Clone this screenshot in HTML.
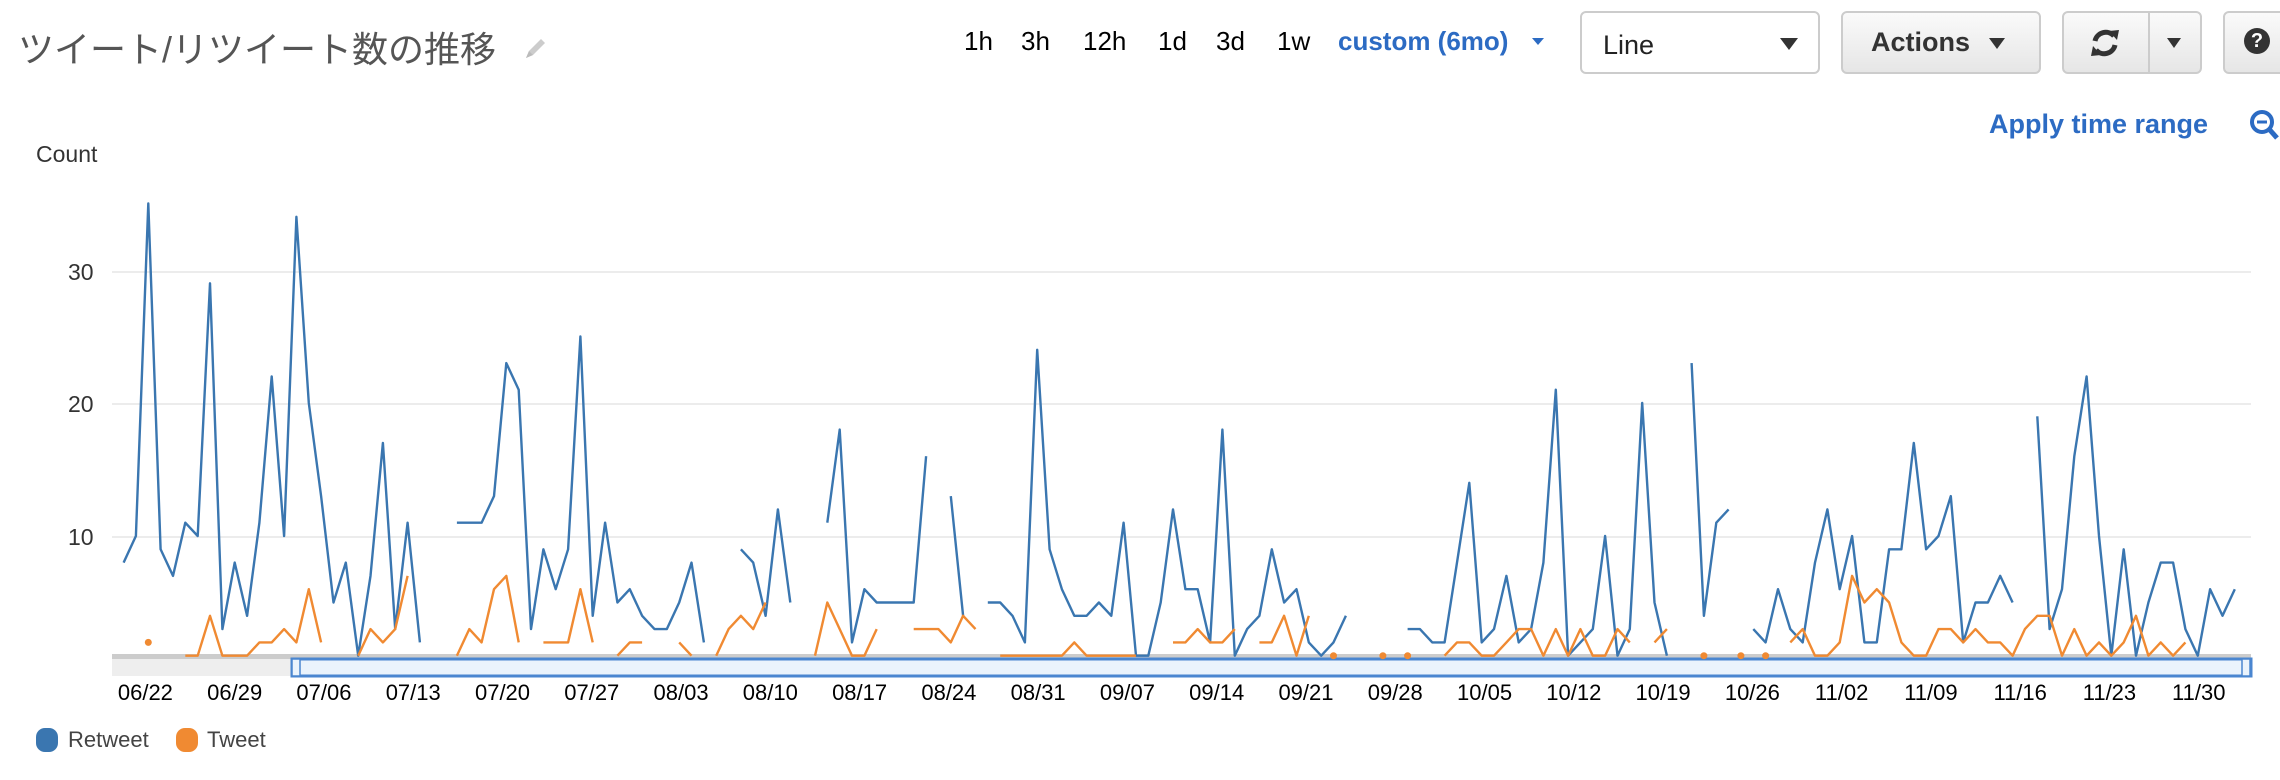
<!DOCTYPE html>
<html><head><meta charset="utf-8">
<style>
body{margin:0;width:2280px;height:780px;background:#fff;font-family:"Liberation Sans","Noto Sans CJK JP",sans-serif;overflow:hidden;position:relative}
.a{position:absolute;white-space:nowrap}
.btn{position:absolute;border:2px solid #ccc;border-radius:6px;background:linear-gradient(#fafafa,#e6e6e6);box-sizing:border-box}
</style></head><body>
<div class="a" style="left:18px;top:21px;font-size:36px;color:#555">ツイート/リツイート数の推移</div>
<svg class="a" style="left:522px;top:36px" width="26" height="26" viewBox="0 0 26 26"><path d="M4 22 L7 15 L19 3 L23 7 L11 19 Z" fill="#ccc"/><path d="M4 22 L7 15 L11 19Z" fill="#bbb"/></svg>
<div class="a" style="left:964px;top:26px;font-size:26px;color:#000;word-spacing:0">1h</div>
<div class="a" style="left:1021px;top:26px;font-size:26px">3h</div>
<div class="a" style="left:1083px;top:26px;font-size:26px">12h</div>
<div class="a" style="left:1158px;top:26px;font-size:26px">1d</div>
<div class="a" style="left:1216px;top:26px;font-size:26px">3d</div>
<div class="a" style="left:1277px;top:26px;font-size:26px">1w</div>
<div class="a" style="left:1338px;top:26px;font-size:26px;color:#2c6bc3;font-weight:bold">custom (6mo)</div>
<div class="a" style="left:1532px;top:38px;width:0;height:0;border-left:6px solid transparent;border-right:6px solid transparent;border-top:7px solid #2c6bc3"></div>
<div class="a" style="left:1580px;top:11px;width:240px;height:63px;border:2px solid #ccc;border-radius:6px;box-sizing:border-box;background:#fff"></div>
<div class="a" style="left:1603px;top:30px;font-size:27px;color:#222">Line</div>
<div class="a" style="left:1780px;top:38px;border-left:9px solid transparent;border-right:9px solid transparent;border-top:12px solid #333"></div>
<div class="btn" style="left:1841px;top:11px;width:200px;height:63px"></div>
<div class="a" style="left:1871px;top:27px;font-size:27px;font-weight:bold;color:#333">Actions</div>
<div class="a" style="left:1989px;top:38px;border-left:8px solid transparent;border-right:8px solid transparent;border-top:11px solid #333"></div>
<div class="btn" style="left:2062px;top:11px;width:140px;height:63px"></div>
<div class="a" style="left:2148px;top:12px;width:2px;height:61px;background:#ccc"></div>
<svg class="a" style="left:2088px;top:26px" width="34" height="34" viewBox="0 0 34 34"><path d="M7 15 A11 11 0 0 1 26 10" stroke="#333" stroke-width="5" fill="none"/><path d="M21 5 L31 4 L29 14Z" fill="#333"/><path d="M27 19 A11 11 0 0 1 8 24" stroke="#333" stroke-width="5" fill="none"/><path d="M13 29 L3 30 L5 20Z" fill="#333"/></svg>
<div class="a" style="left:2167px;top:38px;border-left:7px solid transparent;border-right:7px solid transparent;border-top:10px solid #333"></div>
<div class="btn" style="left:2223px;top:11px;width:80px;height:63px"></div>
<div class="a" style="left:2244px;top:28px;width:26px;height:26px;border-radius:50%;background:#333;color:#fff;font-size:20px;font-weight:bold;text-align:center;line-height:26px">?</div>
<div class="a" style="left:1989px;top:109px;font-size:27px;font-weight:bold;color:#2c6bc3">Apply time range</div>
<svg class="a" style="left:2248px;top:108px" width="32" height="36" viewBox="0 0 32 36"><circle cx="14" cy="14" r="10" stroke="#2c6bc3" stroke-width="4" fill="none"/><path d="M9 14 H19" stroke="#2c6bc3" stroke-width="3"/><path d="M21 21 L29 30" stroke="#2c6bc3" stroke-width="5"/></svg>
<div class="a" style="left:36px;top:141px;font-size:23px;color:#333">Count</div>
<div class="a" style="left:68px;top:259px;font-size:23px;color:#333">30</div>
<div class="a" style="left:68px;top:391px;font-size:23px;color:#333">20</div>
<div class="a" style="left:68px;top:524px;font-size:23px;color:#333">10</div>
<svg class="a" style="left:0;top:0" width="2280" height="780" id="ch">
<line x1="112" y1="272" x2="2251" y2="272" stroke="#e6e6e6" stroke-width="1.5"/>
<line x1="112" y1="404" x2="2251" y2="404" stroke="#e6e6e6" stroke-width="1.5"/>
<line x1="112" y1="537" x2="2251" y2="537" stroke="#e6e6e6" stroke-width="1.5"/>
<rect x="112" y="654" width="2139" height="5" fill="#ccc"/>
<rect x="112" y="659" width="180" height="17" fill="#eee"/>
<rect x="292" y="659" width="1959" height="17" fill="#eaf3fc" stroke="#4a86d0" stroke-width="3"/>
<rect x="292" y="659" width="8" height="17" fill="#eaf3fc" stroke="#4a86d0" stroke-width="1.5"/>
<rect x="2242" y="659" width="8" height="17" fill="#eaf3fc" stroke="#4a86d0" stroke-width="1.5"/>
<g id="lines"></g>
</svg>
<div id="dates"></div>
<div class="a" style="left:36px;top:728px;width:22px;height:24px;border-radius:9px;background:#3a76b0"></div>
<div class="a" style="left:68px;top:727px;font-size:22px;color:#444">Retweet</div>
<div class="a" style="left:176px;top:728px;width:22px;height:24px;border-radius:9px;background:#f08a32"></div>
<div class="a" style="left:207px;top:727px;font-size:22px;color:#444">Tweet</div>
<script>
var n=null;
var B=[8,10,35,9,7,11,10,29,3,8,4,11,22,10,34,20,13,5,8,1,7,17,3,11,2,n,n,11,11,11,13,23,21,3,9,6,9,25,4,11,5,6,4,3,3,5,8,2,n,n,9,8,4,12,5,n,n,11,18,2,6,5,5,5,5,16,n,13,4,n,5,5,4,2,24,9,6,4,4,5,4,11,1,1,5,12,6,6,2,18,1,3,4,9,5,6,2,1,2,4,n,n,n,n,3,3,2,2,8,14,2,3,7,2,3,8,21,1,2,3,10,1,3,20,5,1,n,23,4,11,12,n,3,2,6,3,2,8,12,6,10,2,2,9,9,17,9,10,13,2,5,5,7,5,n,19,3,6,16,22,10,1,9,1,5,8,8,3,1,6,4,6];
var O=[n,n,2,n,n,1,1,4,1,1,1,2,2,3,2,6,2,n,n,1,3,2,3,7,n,n,n,1,3,2,6,7,2,n,2,2,2,6,2,n,1,2,2,n,n,2,1,n,1,3,4,3,5,n,n,n,1,5,3,1,1,3,n,n,3,3,3,2,4,3,n,1,1,1,1,1,1,2,1,1,1,1,1,n,n,2,2,3,2,2,3,n,2,2,4,1,4,n,1,n,n,n,1,n,1,n,n,1,2,2,1,1,2,3,3,1,3,1,3,1,1,3,2,n,2,3,n,n,1,n,n,1,n,1,n,2,3,1,1,2,7,5,6,5,2,1,1,3,3,2,3,2,2,1,3,4,4,1,3,1,2,1,2,4,1,2,1,2];
function X(i){return (85+i*(1452/(B.length-1)))*1.454;}
function Y(v){return 669-v*13.3;}
function path(a,c){var d='',st=false,out='';
for(var i=0;i<a.length;i++){if(a[i]===null){st=false;continue;}
var x=X(i).toFixed(1),y=Y(a[i]).toFixed(1);
var iso=(i==0||a[i-1]===null)&&(i==a.length-1||a[i+1]===null);
if(iso){out+='<circle cx="'+x+'" cy="'+y+'" r="3.5" fill="'+c+'"/>';continue;}
d+=(st?'L':'M')+x+' '+y+' ';st=true;}
return '<path d="'+d+'" fill="none" stroke="'+c+'" stroke-width="2.4" stroke-linejoin="round"/>'+out;}
document.getElementById('lines').innerHTML=path(B,'#3a76b0')+path(O,'#f08a32');
var L=['06/22','06/29','07/06','07/13','07/20','07/27','08/03','08/10','08/17','08/24','08/31','09/07','09/14','09/21','09/28','10/05','10/12','10/19','10/26','11/02','11/09','11/16','11/23','11/30'],h='';
for(var k=0;k<L.length;k++){var cx=(100+k*61.4)*1.454;h+='<div class="a" style="left:'+(cx-32)+'px;top:680px;width:64px;text-align:center;font-size:22px;color:#000">'+L[k]+'</div>';}
document.getElementById('dates').innerHTML=h;
</script>
</body></html>
